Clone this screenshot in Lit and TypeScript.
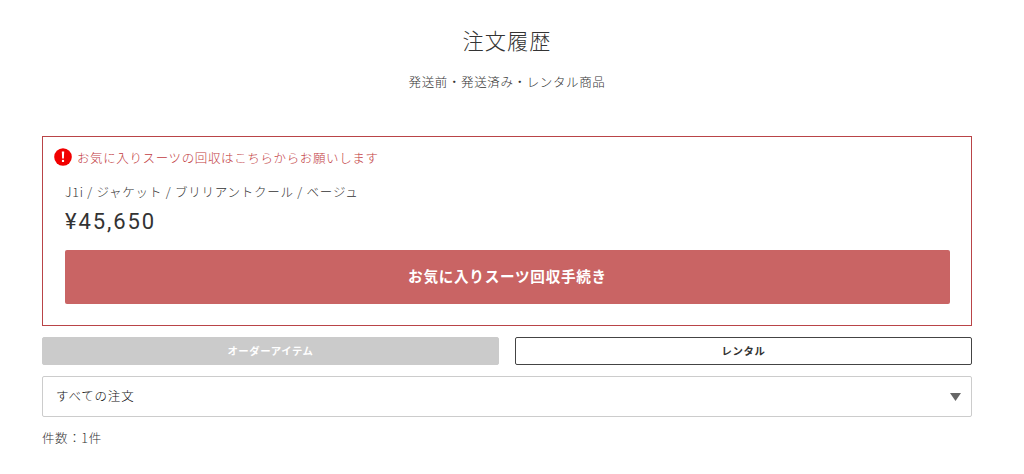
import { LitElement, html, css } from "lit";
import { customElement, property, state } from "lit/decorators.js";
import { classMap } from "lit/directives/class-map.js";

type OrderTab = "order" | "rental";

@customElement("collect-notice")
export class CollectNotice extends LitElement {
  static override styles = css`
    :host {
      display: block;
      box-sizing: border-box;
      height: 190px;
      padding: 10px 21px 0 22px;
      border: 1px solid #b94447;
    }

    .alert {
      display: flex;
      align-items: center;
      gap: 5px;
      height: 20px;
      margin-left: -11px;
      color: #c23c42;
    }

    .alert svg {
      flex: none;
      width: 18px;
      height: 18px;
    }

    .alert span {
      line-height: 20px;
      padding-top: 1px;
    }

    .name {
      height: 20px;
      margin-top: 15px;
      line-height: 20px;
      letter-spacing: 0.77px;
      color: #333;
    }

    .price {
      height: 28px;
      margin-top: 6px;
      font-family: Roboto, sans-serif;
      font-size: 22px;
      font-weight: 400;
      line-height: 28px;
      letter-spacing: 1.9px;
      color: #333;
    }

    button {
      display: block;
      width: 100%;
      height: 54px;
      margin-top: 14px;
      padding: 0 0 4px;
      border: 0;
      border-radius: 2px;
      background: #c96464;
      color: #fff;
      font-family: inherit;
      font-size: 14.6px;
      font-weight: 700;
      letter-spacing: 0.72px;
    }
  `;

  @property({ type: String })
  name = "";

  @property({ type: Number })
  price = 0;

  override render() {
    return html`
      <div class="alert">
        <svg viewBox="0 0 18 18">
          <circle cx="9" cy="9" r="8.8" fill="#f10000" />
          <path d="M7.8 3.6h2.4l-.35 6.9h-1.7z" fill="#fff" />
          <circle cx="9" cy="12.9" r="1.2" fill="#fff" />
        </svg>
        <span>お気に入りスーツの回収はこちらからお願いします</span>
      </div>
      <div class="name">${this.name}</div>
      <div class="price">¥${this.price.toLocaleString("en-US")}</div>
      <button>お気に入りスーツ回収手続き</button>
    `;
  }
}

@customElement("app-root")
export class AppRoot extends LitElement {
  static override styles = css`
    :host {
      display: block;
      box-sizing: border-box;
      height: 474px;
      padding: 24px 52px 0 42px;
      overflow: hidden;
      background: #fff;
      color: #333;
      font-family: "Noto Sans CJK JP", sans-serif;
      font-size: 12.5px;
      font-weight: 300;
      letter-spacing: 0.62px;
    }

    h1 {
      height: 32px;
      margin: 0;
      font-size: 21.2px;
      font-weight: 300;
      line-height: 32px;
      letter-spacing: 1px;
      text-align: center;
      color: #333;
    }

    .lead {
      height: 20px;
      margin: 16px 0 44px;
      line-height: 20px;
      text-align: center;
    }

    .tabs {
      display: grid;
      grid-template-columns: 1fr 1fr;
      gap: 16px;
      margin-top: 11px;
    }

    .tab {
      height: 28px;
      padding: 0 0 2px;
      border: 1px solid #444;
      border-radius: 2px;
      background: #fff;
      color: #333;
      font-family: inherit;
      font-size: 10.4px;
      font-weight: 700;
      letter-spacing: 0.56px;
    }

    .tab.active {
      border-color: #cbcbcb;
      background: #cbcbcb;
      color: #fff;
    }

    .filter {
      display: flex;
      align-items: center;
      justify-content: space-between;
      box-sizing: border-box;
      height: 41px;
      margin-top: 11px;
      padding: 0 10px 0 13px;
      border: 1px solid #ccc;
      border-radius: 2px;
      color: #111;
    }

    .filter span {
      padding-bottom: 2px;
      letter-spacing: 0.8px;
    }

    .filter svg {
      width: 11px;
      height: 8px;
    }

    .count {
      height: 20px;
      margin-top: 11px;
      line-height: 20px;
    }
  `;

  @state()
  private tab: OrderTab = "order";

  private renderTab(id: OrderTab, label: string) {
    return html`
      <button
        class=${classMap({ tab: true, active: this.tab === id })}
        @click=${() => (this.tab = id)}
      >
        ${label}
      </button>
    `;
  }

  override render() {
    return html`
      <h1>注文履歴</h1>
      <div class="lead">発送前・発送済み・レンタル商品</div>
      <collect-notice
        name="J1i / ジャケット / ブリリアントクール / ベージュ"
        .price=${45650}
      ></collect-notice>
      <div class="tabs">
        ${this.renderTab("order", "オーダーアイテム")}
        ${this.renderTab("rental", "レンタル")}
      </div>
      <div class="filter">
        <span>すべての注文</span>
        <svg viewBox="0 0 11 8"><path d="M0 0h11L5.5 8z" fill="#666" /></svg>
      </div>
      <div class="count">件数：1件</div>
    `;
  }
}
